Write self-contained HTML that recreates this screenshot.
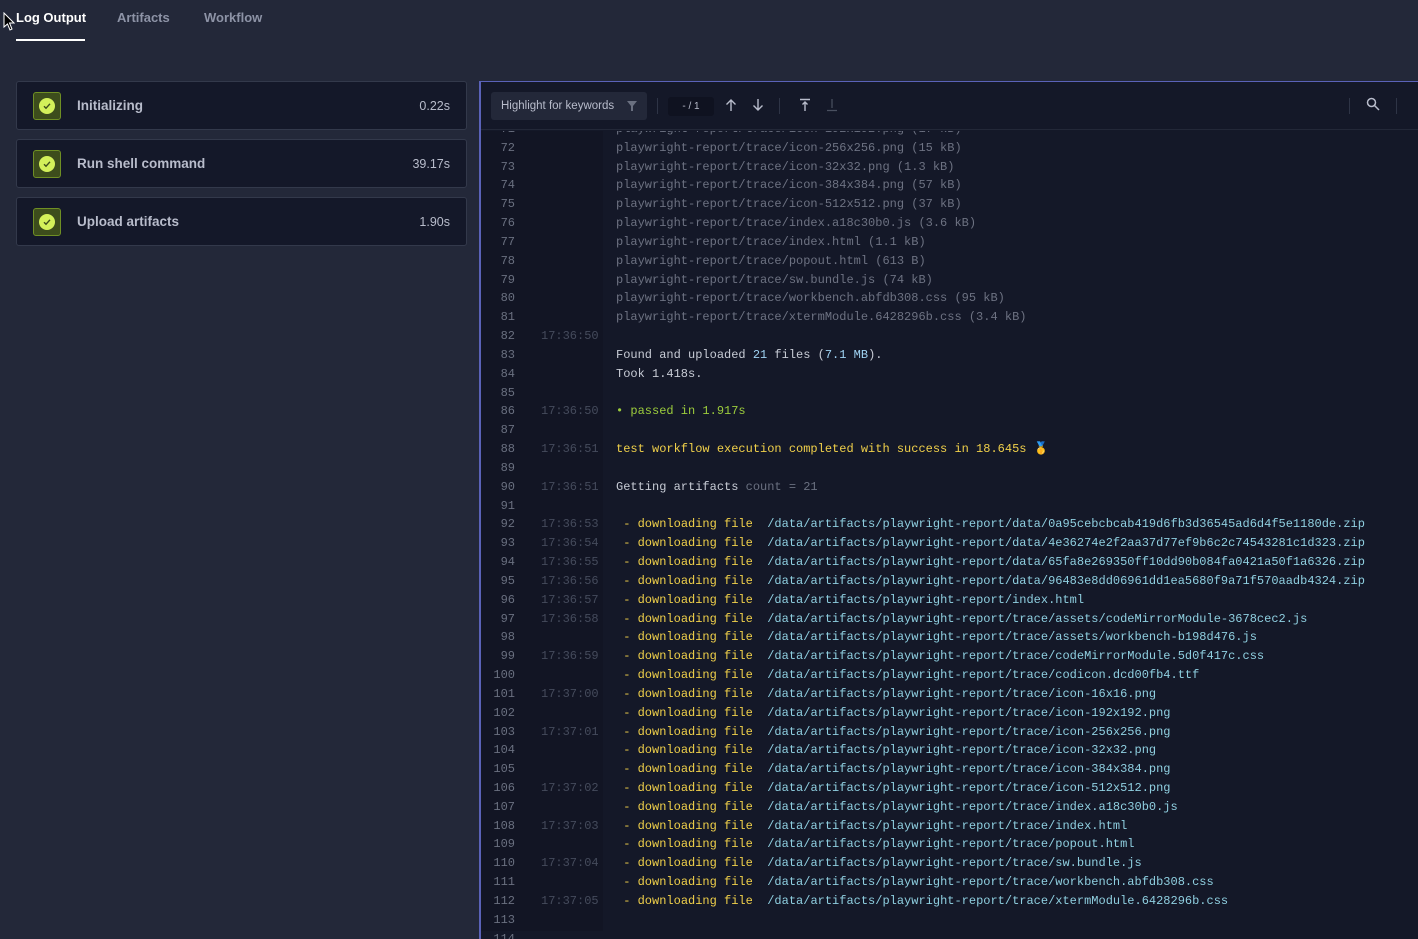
<!DOCTYPE html>
<html><head><meta charset="utf-8"><style>
*{margin:0;padding:0;box-sizing:border-box}
html,body{width:1418px;height:939px;overflow:hidden}
body{background:#232839;font-family:"Liberation Sans",sans-serif;position:relative}
.tab{position:absolute;top:10px;font-size:13px;font-weight:bold;color:#8d93a6}
.card{position:absolute;left:16px;width:451px;height:49px;background:#141829;border:1px solid #33394b;border-radius:3px}
.card .ic{position:absolute;left:16px;top:10px;width:28px;height:28px;background:#3d4d1c;border:1px solid #6f8f24;border-radius:3px}
.card .ic i{position:absolute;left:5px;top:5px;width:16px;height:16px;border-radius:50%;background:#d3f05a}
.card .ic svg{position:absolute;left:5px;top:5px}
.card .t{position:absolute;left:60px;top:16px;font-size:13.5px;font-weight:bold;color:#b8bccb}
.card .d{position:absolute;right:16px;top:17px;font-size:12.5px;color:#b8bccb}
.log{position:absolute;left:479px;top:81px;width:945px;height:870px;background:#141828;border-left:2px solid #5a62b8;border-top:1px solid #5a62b8}
.bar{position:absolute;left:0;top:0;right:0;height:48px;border-bottom:1px solid #232838}
.hl{position:absolute;left:10px;top:10px;width:156px;height:28px;background:#232839;border-radius:3px;font-size:11.5px;color:#b8bccb;padding:8px 10px}
.body{position:absolute;left:0;top:49px;right:0;bottom:0;overflow:hidden;font-family:"Liberation Mono",monospace;font-size:12px}
.gut{position:absolute;left:0;top:0;width:122px;height:800px;background:#121524}
.inner{position:absolute;left:0;top:-11px;right:0}
.l{height:18.83px;line-height:18.83px;white-space:pre;position:relative}
.n{position:absolute;left:0;width:34px;text-align:right;color:#6a7080}
.ts{position:absolute;left:60px;color:#454b5c}
.c{position:absolute;left:135px;color:#c8ccd6}
.dim{color:#6d7282}.b{color:#9fd2f2}.g{color:#9ccc3c}.y{color:#f0d04a}.p{color:#8fcfe0}.m{color:#6a7080}
</style></head><body>
<div class="tab" style="left:16px;color:#fff">Log Output</div>
<div style="position:absolute;left:16px;top:39px;width:69px;height:2px;background:#fff"></div>
<div class="tab" style="left:117px">Artifacts</div>
<div class="tab" style="left:204px">Workflow</div>
<div class="card" style="top:81px"><div class="ic"><i></i><svg width="16" height="16" fill="none" stroke="#3d4d1c" stroke-width="1.4"><path d="M5 8.2l2 2 4-4.4"/></svg></div><div class="t">Initializing</div><div class="d">0.22s</div></div>
<div class="card" style="top:139px"><div class="ic"><i></i><svg width="16" height="16" fill="none" stroke="#3d4d1c" stroke-width="1.4"><path d="M5 8.2l2 2 4-4.4"/></svg></div><div class="t">Run shell command</div><div class="d">39.17s</div></div>
<div class="card" style="top:197px"><div class="ic"><i></i><svg width="16" height="16" fill="none" stroke="#3d4d1c" stroke-width="1.4"><path d="M5 8.2l2 2 4-4.4"/></svg></div><div class="t">Upload artifacts</div><div class="d">1.90s</div></div>
<svg style="position:absolute;left:3px;top:12px" width="12" height="20"><path d="M1 1 L1 15 L4.5 12 L7 18 L9 17 L6.5 11 L11 11 Z" fill="#000" stroke="#fff" stroke-width="1"/></svg>
<div class="log">
<div class="bar">
<div class="hl">Highlight for keywords<svg style="position:absolute;right:10px;top:9px" width="10" height="10"><path d="M0 0H10L6 5V10H4V5Z" fill="#6a7080"/></svg></div>
<div style="position:absolute;left:176px;top:16px;width:1px;height:16px;background:#2e3446"></div>
<div style="position:absolute;left:187px;top:15px;width:46px;height:19px;background:#0f1220;border-radius:3px;color:#b8bccb;font-size:10px;text-align:center;line-height:19px">- / 1</div>
<svg style="position:absolute;left:243px;top:16px" width="14" height="14" fill="none" stroke="#b8bccb" stroke-width="1.4"><path d="M7 13V2M2.5 6.5L7 2l4.5 4.5"/></svg>
<svg style="position:absolute;left:270px;top:16px" width="14" height="14" fill="none" stroke="#b8bccb" stroke-width="1.4"><path d="M7 1v11M2.5 7.5L7 12l4.5-4.5"/></svg>
<div style="position:absolute;left:298px;top:16px;width:1px;height:16px;background:#2e3446"></div>
<svg style="position:absolute;left:317px;top:16px" width="14" height="14" fill="none" stroke="#b8bccb" stroke-width="1.4"><path d="M2 1.5h10M7 4v9M4.5 6.5L7 4l2.5 2.5"/></svg>
<svg style="position:absolute;left:344px;top:16px" width="14" height="14" fill="none" stroke="#4a5060" stroke-width="1.2"><path d="M2 12.5h10M7 1v9"/></svg>
<div style="position:absolute;left:868px;top:16px;width:1px;height:16px;background:#2e3446"></div>
<svg style="position:absolute;left:885px;top:15px" width="14" height="14" fill="none" stroke="#b8bccb" stroke-width="1.5"><circle cx="5.5" cy="5.5" r="4"/><path d="M8.5 8.5L13 13"/></svg>
<div style="position:absolute;left:915px;top:16px;width:1px;height:16px;background:#2e3446"></div>
</div>
<div class="body">
<div class="gut"></div>
<div class="inner">
<div class="l"><span class="n">71</span><span class="c dim">playwright-report/trace/icon-192x192.png (17 kB)</span></div>
<div class="l"><span class="n">72</span><span class="c dim">playwright-report/trace/icon-256x256.png (15 kB)</span></div>
<div class="l"><span class="n">73</span><span class="c dim">playwright-report/trace/icon-32x32.png (1.3 kB)</span></div>
<div class="l"><span class="n">74</span><span class="c dim">playwright-report/trace/icon-384x384.png (57 kB)</span></div>
<div class="l"><span class="n">75</span><span class="c dim">playwright-report/trace/icon-512x512.png (37 kB)</span></div>
<div class="l"><span class="n">76</span><span class="c dim">playwright-report/trace/index.a18c30b0.js (3.6 kB)</span></div>
<div class="l"><span class="n">77</span><span class="c dim">playwright-report/trace/index.html (1.1 kB)</span></div>
<div class="l"><span class="n">78</span><span class="c dim">playwright-report/trace/popout.html (613 B)</span></div>
<div class="l"><span class="n">79</span><span class="c dim">playwright-report/trace/sw.bundle.js (74 kB)</span></div>
<div class="l"><span class="n">80</span><span class="c dim">playwright-report/trace/workbench.abfdb308.css (95 kB)</span></div>
<div class="l"><span class="n">81</span><span class="c dim">playwright-report/trace/xtermModule.6428296b.css (3.4 kB)</span></div>
<div class="l"><span class="n">82</span><span class="ts">17:36:50</span></div>
<div class="l"><span class="n">83</span><span class="c">Found and uploaded <span class="b">21</span> files (<span class="b">7.1 MB</span>).</span></div>
<div class="l"><span class="n">84</span><span class="c">Took 1.418s.</span></div>
<div class="l"><span class="n">85</span></div>
<div class="l"><span class="n">86</span><span class="ts">17:36:50</span><span class="c g">• passed in 1.917s</span></div>
<div class="l"><span class="n">87</span></div>
<div class="l"><span class="n">88</span><span class="ts">17:36:51</span><span class="c y">test workflow execution completed with success in 18.645s 🥇</span></div>
<div class="l"><span class="n">89</span></div>
<div class="l"><span class="n">90</span><span class="ts">17:36:51</span><span class="c">Getting artifacts <span class="m">count = 21</span></span></div>
<div class="l"><span class="n">91</span></div>
<div class="l"><span class="n">92</span><span class="ts">17:36:53</span><span class="c"> <span class="y">- downloading file</span>  <span class="p">/data/artifacts/playwright-report/data/0a95cebcbcab419d6fb3d36545ad6d4f5e1180de.zip</span></span></div>
<div class="l"><span class="n">93</span><span class="ts">17:36:54</span><span class="c"> <span class="y">- downloading file</span>  <span class="p">/data/artifacts/playwright-report/data/4e36274e2f2aa37d77ef9b6c2c74543281c1d323.zip</span></span></div>
<div class="l"><span class="n">94</span><span class="ts">17:36:55</span><span class="c"> <span class="y">- downloading file</span>  <span class="p">/data/artifacts/playwright-report/data/65fa8e269350ff10dd90b084fa0421a50f1a6326.zip</span></span></div>
<div class="l"><span class="n">95</span><span class="ts">17:36:56</span><span class="c"> <span class="y">- downloading file</span>  <span class="p">/data/artifacts/playwright-report/data/96483e8dd06961dd1ea5680f9a71f570aadb4324.zip</span></span></div>
<div class="l"><span class="n">96</span><span class="ts">17:36:57</span><span class="c"> <span class="y">- downloading file</span>  <span class="p">/data/artifacts/playwright-report/index.html</span></span></div>
<div class="l"><span class="n">97</span><span class="ts">17:36:58</span><span class="c"> <span class="y">- downloading file</span>  <span class="p">/data/artifacts/playwright-report/trace/assets/codeMirrorModule-3678cec2.js</span></span></div>
<div class="l"><span class="n">98</span><span class="c"> <span class="y">- downloading file</span>  <span class="p">/data/artifacts/playwright-report/trace/assets/workbench-b198d476.js</span></span></div>
<div class="l"><span class="n">99</span><span class="ts">17:36:59</span><span class="c"> <span class="y">- downloading file</span>  <span class="p">/data/artifacts/playwright-report/trace/codeMirrorModule.5d0f417c.css</span></span></div>
<div class="l"><span class="n">100</span><span class="c"> <span class="y">- downloading file</span>  <span class="p">/data/artifacts/playwright-report/trace/codicon.dcd00fb4.ttf</span></span></div>
<div class="l"><span class="n">101</span><span class="ts">17:37:00</span><span class="c"> <span class="y">- downloading file</span>  <span class="p">/data/artifacts/playwright-report/trace/icon-16x16.png</span></span></div>
<div class="l"><span class="n">102</span><span class="c"> <span class="y">- downloading file</span>  <span class="p">/data/artifacts/playwright-report/trace/icon-192x192.png</span></span></div>
<div class="l"><span class="n">103</span><span class="ts">17:37:01</span><span class="c"> <span class="y">- downloading file</span>  <span class="p">/data/artifacts/playwright-report/trace/icon-256x256.png</span></span></div>
<div class="l"><span class="n">104</span><span class="c"> <span class="y">- downloading file</span>  <span class="p">/data/artifacts/playwright-report/trace/icon-32x32.png</span></span></div>
<div class="l"><span class="n">105</span><span class="c"> <span class="y">- downloading file</span>  <span class="p">/data/artifacts/playwright-report/trace/icon-384x384.png</span></span></div>
<div class="l"><span class="n">106</span><span class="ts">17:37:02</span><span class="c"> <span class="y">- downloading file</span>  <span class="p">/data/artifacts/playwright-report/trace/icon-512x512.png</span></span></div>
<div class="l"><span class="n">107</span><span class="c"> <span class="y">- downloading file</span>  <span class="p">/data/artifacts/playwright-report/trace/index.a18c30b0.js</span></span></div>
<div class="l"><span class="n">108</span><span class="ts">17:37:03</span><span class="c"> <span class="y">- downloading file</span>  <span class="p">/data/artifacts/playwright-report/trace/index.html</span></span></div>
<div class="l"><span class="n">109</span><span class="c"> <span class="y">- downloading file</span>  <span class="p">/data/artifacts/playwright-report/trace/popout.html</span></span></div>
<div class="l"><span class="n">110</span><span class="ts">17:37:04</span><span class="c"> <span class="y">- downloading file</span>  <span class="p">/data/artifacts/playwright-report/trace/sw.bundle.js</span></span></div>
<div class="l"><span class="n">111</span><span class="c"> <span class="y">- downloading file</span>  <span class="p">/data/artifacts/playwright-report/trace/workbench.abfdb308.css</span></span></div>
<div class="l"><span class="n">112</span><span class="ts">17:37:05</span><span class="c"> <span class="y">- downloading file</span>  <span class="p">/data/artifacts/playwright-report/trace/xtermModule.6428296b.css</span></span></div>
<div class="l"><span class="n">113</span></div>
<div class="l"><span class="n">114</span></div>
</div></div></div>
</body></html>
